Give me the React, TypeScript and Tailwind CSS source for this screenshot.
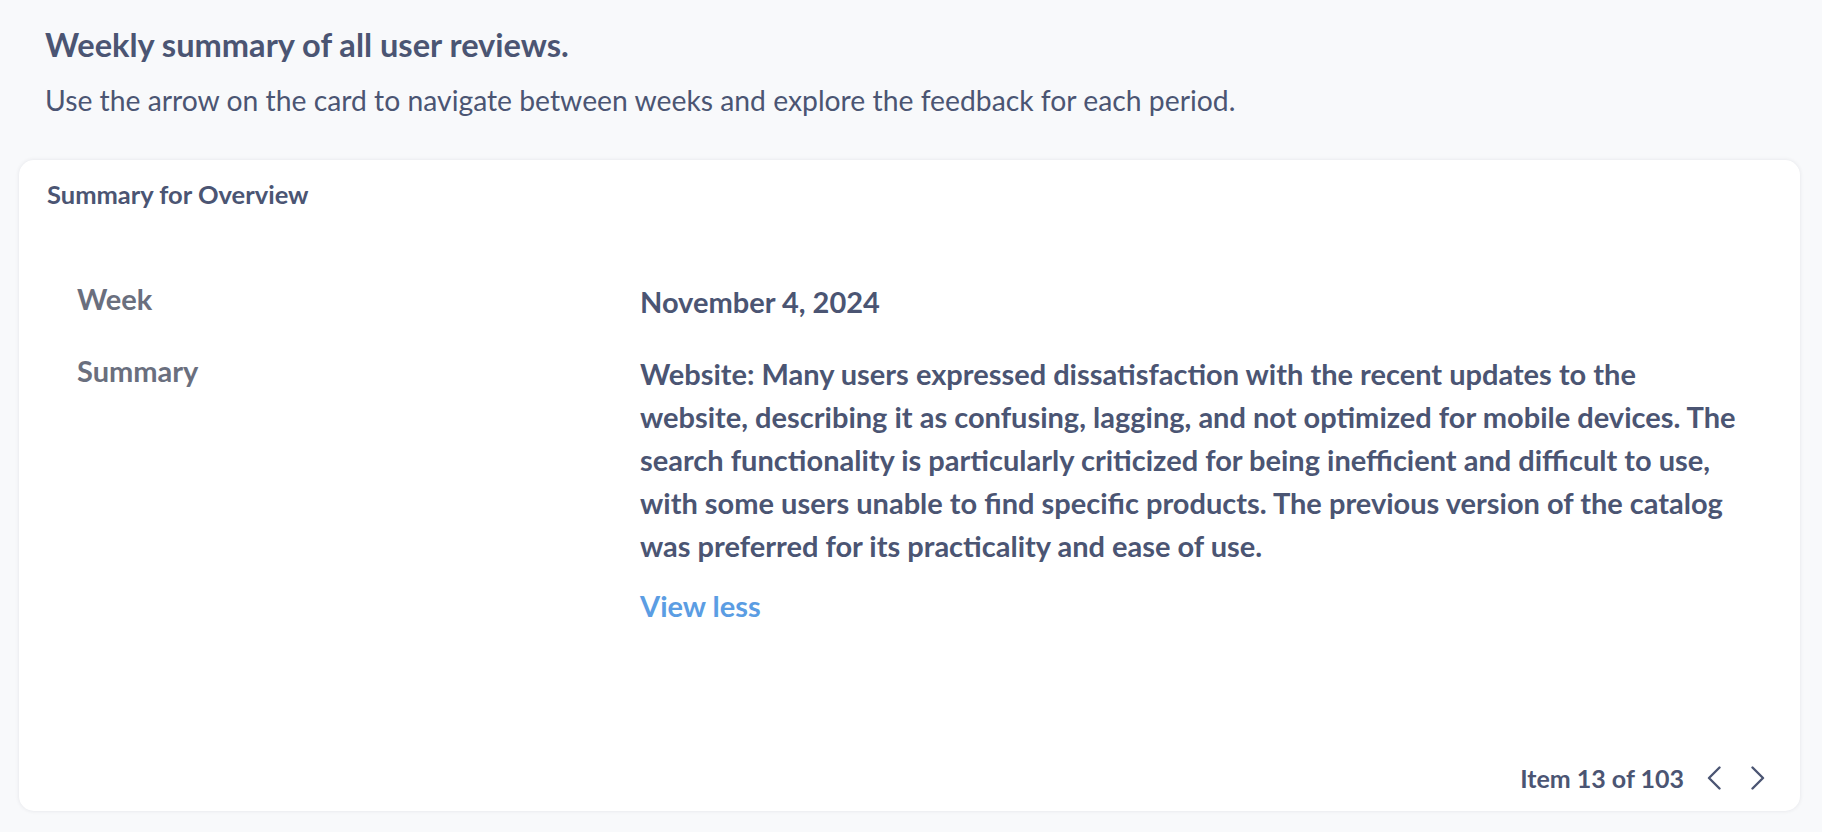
import React from 'react';

const summary =
  'Website: Many users expressed dissatisfaction with the recent updates to the website, describing it as confusing, lagging, and not optimized for mobile devices. The search functionality is particularly criticized for being inefficient and difficult to use, with some users unable to find specific products. The previous version of the catalog was preferred for its practicality and ease of use.';

function Chevron({ dir }: { dir: 'left' | 'right' }) {
  return (
    <svg width="14" height="24" viewBox="0 0 14 24" fill="none" stroke="#4b5573" strokeWidth="2.4" strokeLinecap="round" strokeLinejoin="round">
      {dir === 'left' ? <path d="M12.5 1.5 2 12l10.5 10.5" /> : <path d="M1.5 1.5 12 12 1.5 22.5" />}
    </svg>
  );
}

export default function App() {
  return (
    <div className="min-h-screen w-full bg-[#f8f9fb] pl-[19px] pr-[22px] pt-[27px] font-['Lato','Open_Sans',sans-serif] text-[#4b5573]">
      {/* Header */}
      <div className="pl-[26px]">
        <h1 className="text-[32.6px] font-bold leading-[36px]">Weekly summary of all user reviews.</h1>
        <p className="mt-[19px] text-[28.3px] leading-[36px]">
          Use the arrow on the card to navigate between weeks and explore the feedback for each period.
        </p>
      </div>

      {/* Card */}
      <div className="mt-[42px] flex h-[651px] flex-col rounded-[15px] bg-white shadow-[0_0_4px_rgba(15,23,42,0.09)]">
        <div className="pl-[28px] pt-[18px]">
          <h2 className="text-[25.5px] font-bold leading-[32px]">Summary for Overview</h2>
        </div>

        <div className="mt-[70px] grid grid-cols-[563px_1102px] gap-y-[29px] pl-[58px]">
          <div className="pt-[1px] text-[29px] font-bold leading-[36px] text-[#6a6f7e]">Week</div>
          <div className="text-[29px] font-bold leading-[43px]">November 4, 2024</div>

          <div className="pt-[1px] text-[29px] font-bold leading-[36px] text-[#6a6f7e]">Summary</div>
          <div>
            <p className="text-[29px] font-bold leading-[43px]">{summary}</p>
            <button className="mt-[17px] text-[29px] font-bold leading-[43px] text-[#5b9de3]">View less</button>
          </div>
        </div>

        <div className="mt-auto flex items-center justify-end pb-[15px] pr-[20px]">
          <span className="mr-[8px] text-[25px] font-bold leading-[36px]">Item 13 of 103</span>
          <button className="flex h-[36px] w-[44px] items-center justify-center">
            <Chevron dir="left" />
          </button>
          <button className="flex h-[36px] w-[44px] items-center justify-center">
            <Chevron dir="right" />
          </button>
        </div>
      </div>
    </div>
  );
}
